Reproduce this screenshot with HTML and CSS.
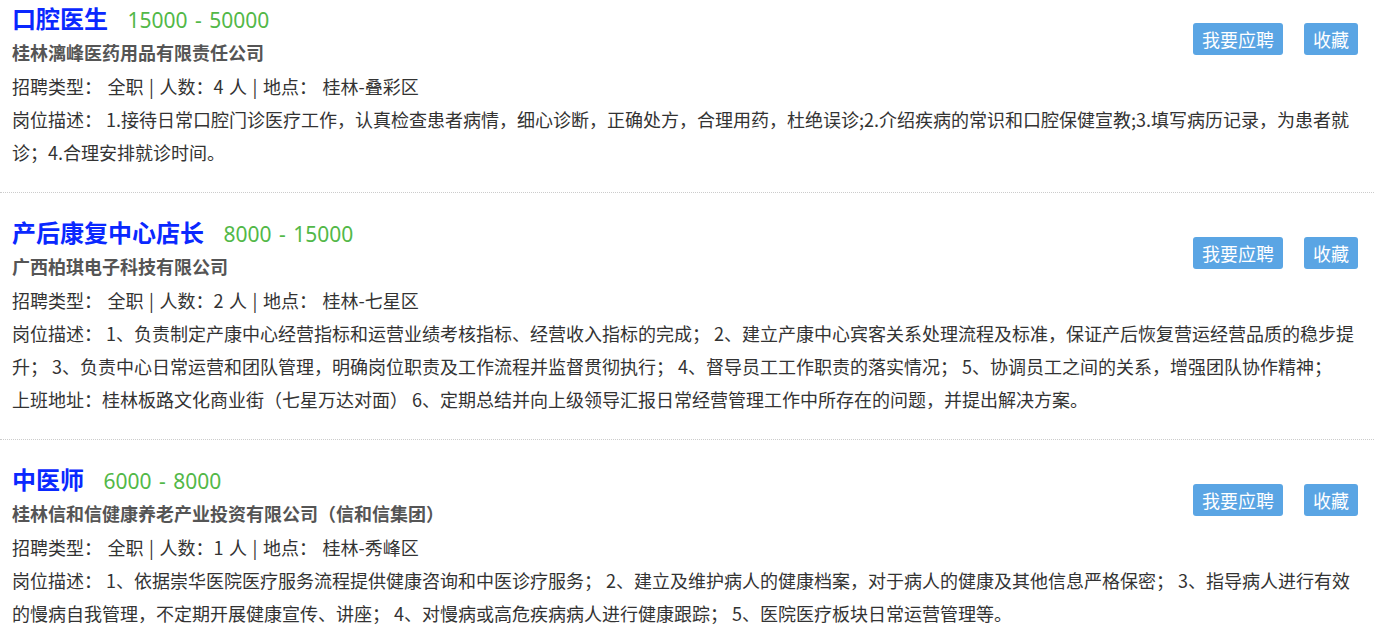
FILE: index.html
```html
<!DOCTYPE html>
<html lang="zh-CN">
<head>
    <meta charset="UTF-8">
    <title>招聘信息</title>
    <link rel="stylesheet" href="styles.css">
</head>
<body>

    <div class="job_list">

        <!-- 职位 1 -->
        <div class="job">
            <div class="job_btns">
                <a href="#" class="btn">我要应聘</a>
                <a href="#" class="btn">收藏</a>
            </div>
            <h2 class="job_title">口腔医生 <span class="salary">15000 - 50000</span></h2>
            <p class="company">桂林漓峰医药用品有限责任公司</p>
            <p class="info">招聘类型： 全职 | 人数：4 人 | 地点： 桂林-叠彩区</p>
            <p class="desc">岗位描述： 1.接待日常口腔门诊医疗工作，认真检查患者病情，细心诊断，正确处方，合理用药，杜绝误诊;2.介绍疾病的常识和口腔保健宣教;3.填写病历记录，为患者就诊；4.合理安排就诊时间。</p>
        </div>

        <!-- 职位 2 -->
        <div class="job">
            <div class="job_btns">
                <a href="#" class="btn">我要应聘</a>
                <a href="#" class="btn">收藏</a>
            </div>
            <h2 class="job_title">产后康复中心店长 <span class="salary">8000 - 15000</span></h2>
            <p class="company">广西柏琪电子科技有限公司</p>
            <p class="info">招聘类型： 全职 | 人数：2 人 | 地点： 桂林-七星区</p>
            <p class="desc">岗位描述： 1、负责制定产康中心经营指标和运营业绩考核指标、经营收入指标的完成； 2、建立产康中心宾客关系处理流程及标准，保证产后恢复营运经营品质的稳步提升； 3、负责中心日常运营和团队管理，明确岗位职责及工作流程并监督贯彻执行； 4、督导员工工作职责的落实情况； 5、协调员工之间的关系，增强团队协作精神；<br>上班地址：桂林板路文化商业街（七星万达对面） 6、定期总结并向上级领导汇报日常经营管理工作中所存在的问题，并提出解决方案。</p>
        </div>

        <!-- 职位 3 -->
        <div class="job">
            <div class="job_btns">
                <a href="#" class="btn">我要应聘</a>
                <a href="#" class="btn">收藏</a>
            </div>
            <h2 class="job_title">中医师 <span class="salary">6000 - 8000</span></h2>
            <p class="company">桂林信和信健康养老产业投资有限公司（信和信集团）</p>
            <p class="info">招聘类型： 全职 | 人数：1 人 | 地点： 桂林-秀峰区</p>
            <p class="desc">岗位描述： 1、依据崇华医院医疗服务流程提供健康咨询和中医诊疗服务； 2、建立及维护病人的健康档案，对于病人的健康及其他信息严格保密； 3、指导病人进行有效的慢病自我管理，不定期开展健康宣传、讲座； 4、对慢病或高危疾病病人进行健康跟踪； 5、医院医疗板块日常运营管理等。</p>
        </div>

    </div>

</body>
</html>
```

FILE: styles.css
```css
* {
    margin: 0;
    padding: 0;
    box-sizing: border-box;
}

body {
    font-family: "Noto Sans CJK SC", "Noto Sans", sans-serif;
    font-size: 18px;
    color: #333;
    background-color: #fff;
}

.job {
    padding: 21px 16px 23px 12px;
    border-bottom: 1px dotted #ccc;
}

.job:first-child {
    padding-top: 0;
}

.job_title {
    font-size: 24px;
    font-weight: bold;
    color: #0a28ff;
    line-height: 36px;
}

.salary {
    font-family: "Noto Sans", sans-serif;
    font-size: 21px;
    font-weight: normal;
    word-spacing: 2px;
    color: #52b848;
    margin-left: 14px;
}

.company {
    font-size: 18px;
    font-weight: bold;
    color: #555;
    line-height: 28px;
    margin-bottom: 4px;
}

.info,
.desc {
    line-height: 33px;
}

.info {
    word-spacing: 1.5px;
}

.job_btns {
    float: right;
    margin-top: 23px;
    display: flex;
    gap: 21px;
}

.btn {
    display: block;
    height: 32px;
    line-height: 32px;
    padding: 0 9px;
    font-size: 18px;
    color: #fff;
    text-decoration: none;
    background-color: #5aa5e4;
    border-radius: 3px;
}
```
